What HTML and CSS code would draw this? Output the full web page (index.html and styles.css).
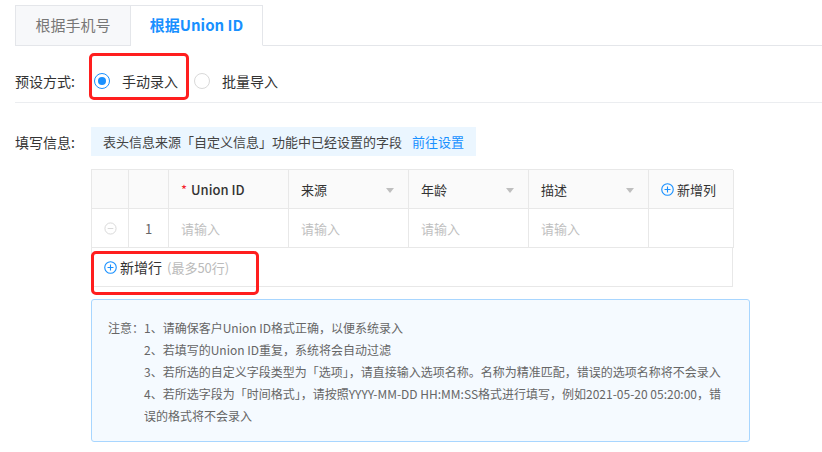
FILE: index.html
```html
<!DOCTYPE html>
<html lang="zh-CN">
<head>
<meta charset="utf-8">
<link rel="stylesheet" href="styles.css">
</head>
<body>
<div class="page">
  <div class="tabs">
    <div class="tab">根据手机号</div>
    <div class="tab active">根据Union ID</div>
  </div>

  <div class="form-row mode-row">
    <div class="label">预设方式:</div>
    <div class="radios">
      <span class="highlight hl-radio"></span>
      <label class="radio checked"><span class="dot"></span><span class="radio-text">手动录入</span></label>
      <label class="radio"><span class="dot"></span><span class="radio-text">批量导入</span></label>
    </div>
  </div>

  <div class="form-row info-row">
    <div class="label">填写信息:</div>
    <div class="info">表头信息来源「自定义信息」功能中已经设置的字段<a class="link">前往设置</a></div>
  </div>

  <div class="table-wrap">
    <div class="grid">
      <div class="cell head"></div>
      <div class="cell head"></div>
      <div class="cell head"><span class="req">*</span><span class="strong">Union ID</span></div>
      <div class="cell head select">来源<span class="caret"></span></div>
      <div class="cell head select">年龄<span class="caret"></span></div>
      <div class="cell head select">描述<span class="caret"></span></div>
      <div class="cell head add-col"><svg class="plus" viewBox="0 0 14 14"><circle cx="7" cy="7" r="6.2" fill="none" stroke="#1890ff" stroke-width="1.2"/><path d="M7 3.8v6.4M3.8 7h6.4" stroke="#1890ff" stroke-width="1.2"/></svg>新增列</div>

      <div class="cell center"><svg class="minus" viewBox="0 0 14 14"><circle cx="7" cy="7" r="6" fill="none" stroke="#d6d6d6" stroke-width="1"/><path d="M4 7h6" stroke="#d6d6d6" stroke-width="1"/></svg></div>
      <div class="cell center idx">1</div>
      <div class="cell ph">请输入</div>
      <div class="cell ph">请输入</div>
      <div class="cell ph">请输入</div>
      <div class="cell ph">请输入</div>
      <div class="cell"></div>
    </div>
    <div class="add-row">
      <span class="highlight hl-add"></span>
      <svg class="plus" viewBox="0 0 14 14"><circle cx="7" cy="7" r="6.2" fill="none" stroke="#1890ff" stroke-width="1.2"/><path d="M7 3.8v6.4M3.8 7h6.4" stroke="#1890ff" stroke-width="1.2"/></svg><span class="add-text">新增行</span><span class="limit">(最多50行)</span>
    </div>
  </div>

  <div class="notice">
    <div class="notice-title">注意：</div>
    <div class="notice-list">
      <div>1、请确保客户Union ID格式正确，以便系统录入</div>
      <div>2、若填写的Union ID重复，系统将会自动过滤</div>
      <div>3、若所选的自定义字段类型为「选项」，请直接输入选项名称。名称为精准匹配，错误的选项名称将不会录入</div>
      <div>4、若所选字段为「时间格式」，请按照YYYY-MM-DD HH:MM:SS格式进行填写，例如2021-05-20 05:20:00，错<br>误的格式将不会录入</div>
    </div>
  </div>
</div>
</body>
</html>
```

FILE: styles.css
```css
* { box-sizing: border-box; }
html, body { margin: 0; padding: 0; background: #fff; }
body {
  font-family: "Noto Sans CJK SC", "Microsoft YaHei", sans-serif;
  color: #333;
  font-size: 14px;
}
.page { padding: 5px 0 0 15px; }

.tabs {
  display: flex;
  height: 41px;
  border-bottom: 1px solid #e4e6ea;
}
.tab {
  width: 116px;
  height: 41px;
  line-height: 38px;
  text-align: center;
  font-size: 15px;
  color: #777;
  background: #f7f8fa;
  border: 1px solid #e4e6ea;
}
.tab.active {
  width: 132px;
  background: #fff;
  color: #1890ff;
  font-weight: 600;
  border-left: none;
  border-bottom-color: #fff;
}

.form-row { display: flex; align-items: center; }
.label { width: 76px; font-size: 14px; color: #333; flex: none; }

.mode-row {
  margin-top: 24px;
  height: 33px;
  padding-bottom: 11px;
  border-bottom: 1px solid #ebedf0;
  align-items: center;
}
.mode-row .label, .mode-row .radios { height: 22px; line-height: 22px; }
.radios { position: relative; display: flex; align-items: center; padding-left: 3px; }
.radio { display: flex; align-items: center; margin-right: 16px; }
.dot {
  width: 16px; height: 16px;
  border: 1px solid #d9d9d9;
  border-radius: 50%;
  position: relative;
  background: #fff;
}
.radio.checked .dot { border-color: #1890ff; }
.radio.checked .dot::after {
  content: "";
  position: absolute;
  left: 3px; top: 3px;
  width: 8px; height: 8px;
  border-radius: 50%;
  background: #1890ff;
}
.radio-text { margin-left: 12px; font-size: 14px; color: #333; }

.highlight {
  position: absolute;
  border: 3px solid #ff1e1e;
  border-radius: 5px;
  pointer-events: none;
}
.hl-radio { left: -2px; top: -17px; width: 100px; height: 47px; }

.info-row { margin-top: 24px; }
.info {
  height: 29px;
  line-height: 29px;
  background: #ebf6ff;
  padding: 0 12px;
  font-size: 13px;
  color: #444;
}
.link { color: #1890ff; margin-left: 10px; }

.table-wrap { margin: 13px 0 0 76px; width: 642px; position: relative; }
.grid {
  display: grid;
  grid-template-columns: 37px 40px 120px 120px 120px 120px 85px;
  grid-auto-rows: 39px;
  border-top: 1px solid #e8e8e8;
  border-left: 1px solid #e8e8e8;
}
.cell {
  border-right: 1px solid #e8e8e8;
  border-bottom: 1px solid #e8e8e8;
  display: flex;
  align-items: center;
  padding: 0 12px;
  font-size: 13px;
  position: relative;
}
.cell.head { background: #fafafa; color: #333; }
.req { color: #f5222d; margin-right: 4px; font-size: 13px; }
.strong { font-weight: 500; color: #333; }
.caret {
  position: absolute;
  right: 14px; top: 18px;
  width: 0; height: 0;
  border-left: 4px solid transparent;
  border-right: 4px solid transparent;
  border-top: 5px solid #bfbfbf;
}
.add-col { padding-left: 12px; color: #333; }
.plus { width: 13px; height: 13px; margin-right: 3px; flex: none; }
.center { justify-content: center; padding: 0; }
.minus { width: 13px; height: 13px; }
.idx { color: #666; }
.ph { color: #bfbfbf; }

.add-row {
  position: relative;
  height: 39px;
  border: 1px solid #e8e8e8;
  border-top: none;
  display: flex;
  align-items: center;
  padding-left: 12px;
  font-size: 13px;
}
.add-row .plus { margin-right: 3px; }
.add-text { color: #333; font-size: 14px; }
.limit { color: #bbb; margin-left: 5px; font-size: 13px; }
.hl-add { left: -1px; top: 3px; width: 168px; height: 44px; }

.notice {
  margin: 12px 0 0 76px;
  width: 659px;
  height: 143px;
  border: 1px solid #a8d6ff;
  border-radius: 3px;
  background: #f5faff;
  display: flex;
  padding: 17px 6px 0 16px;
  font-size: 12px;
  line-height: 22px;
  color: #666;
}
.notice-title { flex: none; width: 36px; }
.notice-list { flex: 1; }
```
